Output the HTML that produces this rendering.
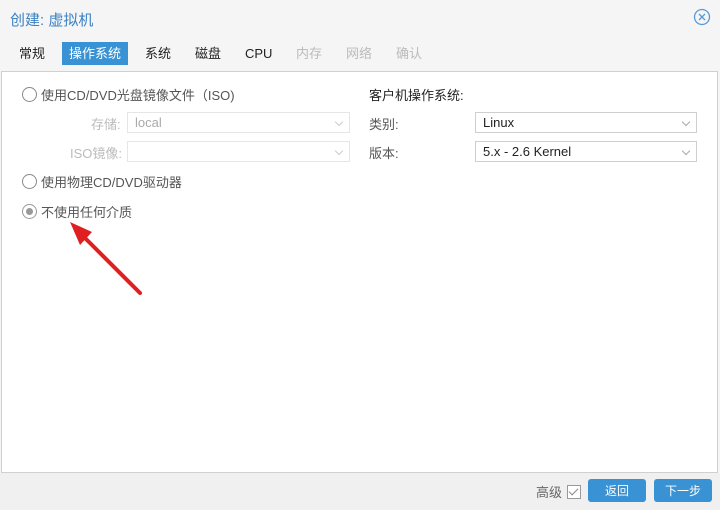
<!DOCTYPE html>
<html><head><meta charset="utf-8"><style>
body{margin:0;width:720px;height:510px;background:#f5f5f5;font-family:"Liberation Sans","Noto Sans CJK SC",sans-serif;font-size:13px;color:#222;position:relative;overflow:hidden}
.a{position:absolute;white-space:nowrap}
.tab{position:absolute;top:42px;height:23px;line-height:23px;font-size:13px}
.sel{position:absolute;background:#fff;border:1px solid #cfcfcf;height:21px;box-sizing:border-box;line-height:20px;padding-left:7px}
.sel.d{border-color:#e6e6e6;color:#aaa}
.chev{position:absolute;right:7px;top:6px;width:5px;height:5px;border-right:1px solid #aaa;border-bottom:1px solid #aaa;transform:rotate(45deg)}
.radio{position:absolute;width:15px;height:15px;border:1px solid #888;border-radius:50%;box-sizing:border-box}
.btn{position:absolute;top:479px;height:23px;line-height:23px;background:#3892d4;color:#fff;text-align:center;border-radius:3px;font-size:12px}
</style></head><body>
<div class="a" style="left:10px;top:9px;font-size:15px;color:#3b82c4">创建: 虚拟机</div>
<svg class="a" style="left:693px;top:8px" width="18" height="18"><circle cx="9" cy="9" r="7.5" fill="none" stroke="#5a9ad4" stroke-width="1.3"/><path d="M6 6L12 12M12 6L6 12" stroke="#5a9ad4" stroke-width="1.3"/></svg>
<div class="tab" style="left:19px">常规</div>
<div class="tab" style="left:62px;width:66px;background:#3892d4;color:#fff;text-align:center">操作系统</div>
<div class="tab" style="left:145px">系统</div>
<div class="tab" style="left:195px">磁盘</div>
<div class="tab" style="left:245px">CPU</div>
<div class="tab" style="left:296px;color:#bbb">内存</div>
<div class="tab" style="left:346px;color:#bbb">网络</div>
<div class="tab" style="left:396px;color:#bbb">确认</div>
<div class="a" style="left:1px;top:71px;width:715px;height:400px;background:#fff;border:1px solid #d0d0d0"></div>
<div class="radio" style="left:22px;top:87px"></div>
<div class="a" style="left:41px;top:85px;color:#555">使用CD/DVD光盘镜像文件（ISO)</div>
<div class="a" style="left:91px;top:114px;color:#bbb">存储:</div>
<div class="sel d" style="left:127px;top:112px;width:223px">local<div class="chev" style="border-color:#ccc"></div></div>
<div class="a" style="left:70px;top:143px;color:#bbb">ISO镜像:</div>
<div class="sel d" style="left:127px;top:141px;width:223px"><div class="chev" style="border-color:#ccc"></div></div>
<div class="radio" style="left:22px;top:174px"></div>
<div class="a" style="left:41px;top:172px;color:#555">使用物理CD/DVD驱动器</div>
<div class="radio" style="left:22px;top:204px;border-color:#999"><div style="position:absolute;left:3px;top:3px;width:7px;height:7px;border-radius:50%;background:#999"></div></div>
<div class="a" style="left:41px;top:202px;color:#555">不使用任何介质</div>
<svg class="a" style="left:0;top:0" width="200" height="300"><path d="M140 293L82 235" stroke="#e02020" stroke-width="4" stroke-linecap="round"/><path d="M70 222L92 232L80 245Z" fill="#e02020"/></svg>
<div class="a" style="left:369px;top:85px">客户机操作系统:</div>
<div class="a" style="left:369px;top:114px;color:#555">类别:</div>
<div class="sel" style="left:475px;top:112px;width:222px">Linux<div class="chev"></div></div>
<div class="a" style="left:369px;top:143px;color:#555">版本:</div>
<div class="sel" style="left:475px;top:141px;width:222px">5.x - 2.6 Kernel<div class="chev"></div></div>
<div class="a" style="left:0;top:473px;width:720px;height:37px;background:#f0f0f0"></div>
<div class="a" style="left:536px;top:482px;color:#666">高级</div>
<div class="a" style="left:567px;top:485px;width:12px;height:12px;border:1px solid #999;background:#fff"><div style="position:absolute;left:3px;top:0px;width:4px;height:8px;border-right:1px solid #888;border-bottom:1px solid #888;transform:rotate(45deg)"></div></div>
<div class="btn" style="left:588px;width:58px;line-height:24px">返回</div>
<div class="btn" style="left:654px;width:58px;line-height:24px">下一步</div>
</body></html>
